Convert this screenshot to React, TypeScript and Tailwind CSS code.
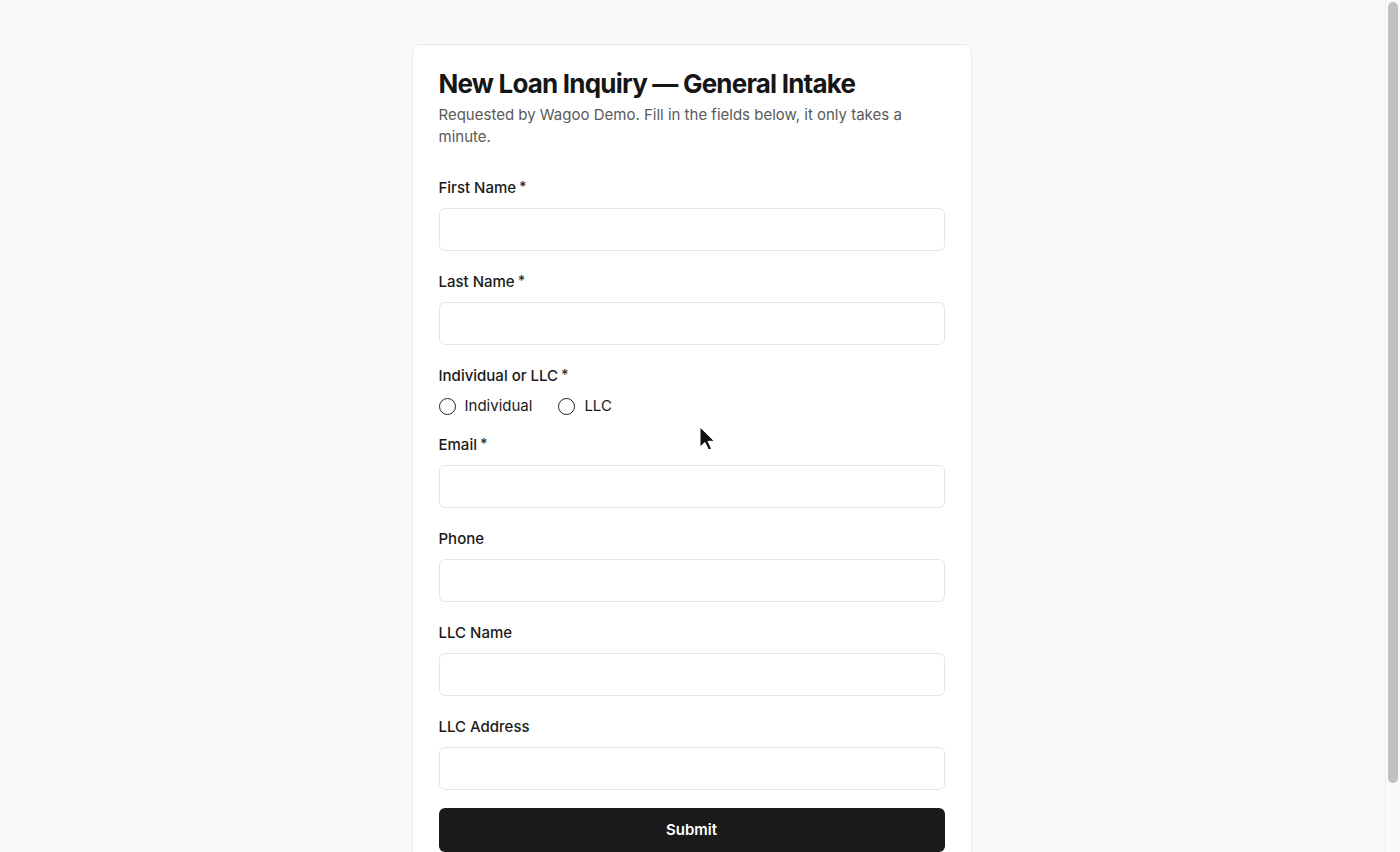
import { useState } from "react";

type Field = { label: string; required?: boolean; type?: string };

const topFields: Field[] = [
  { label: "First Name", required: true },
  { label: "Last Name", required: true },
];

const bottomFields: Field[] = [
  { label: "Email", required: true, type: "email" },
  { label: "Phone", type: "tel" },
  { label: "LLC Name" },
  { label: "LLC Address" },
];

const Label = ({ text, required }: { text: string; required?: boolean }) => (
  <label className="flex items-start text-[15px] leading-5 font-medium text-[#1a1a1a]">
    {text}
    {required && <span className="ml-[3px] text-[14px] leading-[18px] font-semibold text-[#333]">*</span>}
  </label>
);

const TextField = ({ label, required, type = "text" }: Field) => (
  <div className="flex flex-col gap-[10px]">
    <Label text={label} required={required} />
    <input
      type={type}
      className="h-[43px] w-full rounded-md border border-[#e6e6e6] bg-white px-3 text-[15px] outline-none"
    />
  </div>
);

const Radio = ({ label, checked, onClick }: { label: string; checked: boolean; onClick: () => void }) => (
  <button type="button" onClick={onClick} className="flex h-5 items-center gap-[9px] text-[15px] leading-5 text-[#1a1a1a]">
    <span className="flex h-[17px] w-[17px] items-center justify-center rounded-full border-[1.5px] border-[#222]">
      {checked && <span className="h-2 w-2 rounded-full bg-[#222]" />}
    </span>
    {label}
  </button>
);

export default function App() {
  const [entity, setEntity] = useState<string | null>(null);

  return (
    <div className="relative flex bg-[#fafafa]" style={{ fontFamily: "Inter, 'Noto Sans', sans-serif" }}>
      <main className="flex-1 pt-[44px] pr-[2px] pb-[60px]">
        <div className="mx-auto w-[560px] rounded-lg border border-[#ebebeb] bg-white px-[26px] pt-[23px] pb-[27px]">
          <h1 className="text-[26px] leading-[32px] font-bold tracking-[-0.8px] text-[#161616]">
            New Loan Inquiry — General Intake
          </h1>
          <p className="mt-[4px] text-[15px] leading-[22px] text-[#5a5a5a]">
            Requested by Wagoo Demo. Fill in the fields below, it only takes a minute.
          </p>

          <form className="mt-[30px] flex flex-col gap-[21px]" onSubmit={(e) => e.preventDefault()}>
            {topFields.map((f) => (
              <TextField key={f.label} {...f} />
            ))}

            <div className="-mb-[1px] flex flex-col gap-[10px]">
              <Label text="Individual or LLC" required />
              <div className="flex items-center gap-[26px]">
                <Radio label="Individual" checked={entity === "individual"} onClick={() => setEntity("individual")} />
                <Radio label="LLC" checked={entity === "llc"} onClick={() => setEntity("llc")} />
              </div>
            </div>

            {bottomFields.map((f, i) => (
              <div key={f.label} className={i === 0 ? "-mt-[1px]" : ""}>
                <TextField {...f} />
              </div>
            ))}

            <button
              type="submit"
              className="-mt-[3px] h-[44px] w-full rounded-md bg-[#1a1a1a] text-[15px] font-semibold text-white"
            >
              Submit
            </button>
          </form>
        </div>
      </main>

      {/* scrollbar rail */}
      <aside className="sticky top-0 flex h-screen w-[15px] shrink-0 flex-col border-l border-[#ececec] bg-[#fafafa] px-[2px] pt-[2px]">
        <div className="h-[781px] w-full rounded-full bg-[#c1c1c1]" />
      </aside>

      {/* mouse pointer */}
      <svg className="pointer-events-none absolute left-[699px] top-[426px]" width="17" height="26" viewBox="0 0 17 26">
        <path d="M1 1 L1 21 L6 16.5 L9.5 24 L12.5 22.7 L9 15.3 L15.5 15.3 Z" fill="#111" stroke="#fff" strokeWidth="1" />
      </svg>
    </div>
  );
}
